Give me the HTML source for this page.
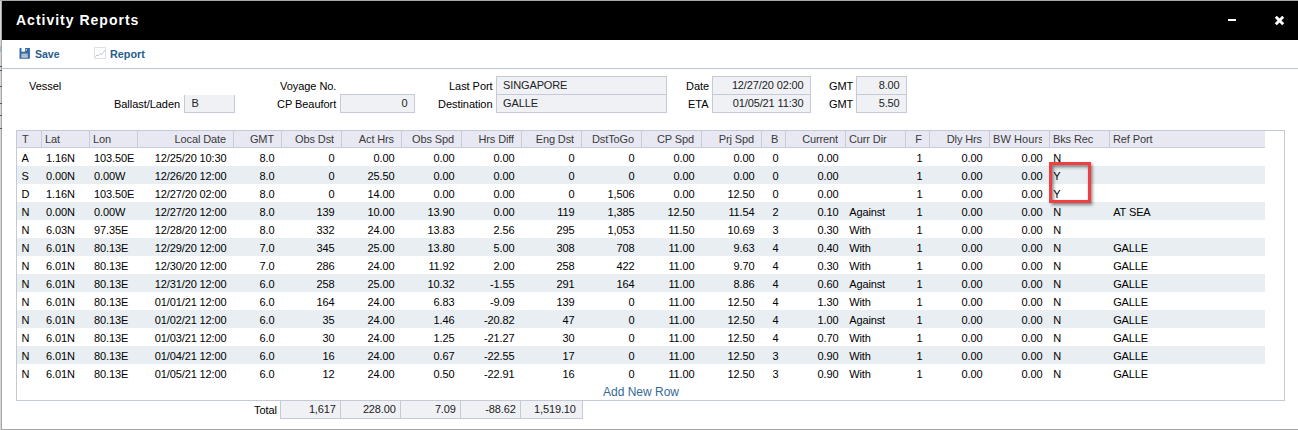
<!DOCTYPE html>
<html><head><meta charset="utf-8">
<style>
*{box-sizing:border-box;margin:0;padding:0}
html,body{width:1298px;height:430px;overflow:hidden;background:#fff;font-family:"Liberation Sans",Arial,sans-serif;font-size:11px;color:#000;letter-spacing:-0.12px}
#bgl{position:absolute;left:0;top:0;width:2px;height:430px;background:linear-gradient(90deg,#d6d6d6 0,#d6d6d6 1px,#a9a9a9 1px,#a9a9a9 2px)}
#bgt{position:absolute;left:0;top:0;width:1298px;height:1px;background:#a8a8ac}
#bgb{position:absolute;left:1px;top:429px;width:1297px;height:1px;background:#a6a6a6}
#title{position:absolute;left:2px;top:1px;width:1296px;height:39px;background:#000;color:#fff;font-weight:bold;font-size:14px;letter-spacing:1px}
#title span{position:absolute;left:14px;top:11px;line-height:16px}
#min{position:absolute;left:1226px;top:18px;width:8px;height:2px;background:#fff}
#tbline{position:absolute;left:2px;top:68px;width:1296px;height:1px;background:#b9c7d8}
.tbt{position:absolute;top:47.3px;font-weight:bold;font-size:11.5px;color:#265d8d;line-height:14px;letter-spacing:0;transform-origin:0 0;white-space:nowrap}
.lbl{position:absolute;line-height:14px;white-space:nowrap;letter-spacing:-0.05px}
.fld{position:absolute;height:19px;background:#f0f1f5;border:1px solid #c5cad6;line-height:14px;padding:1px 6px 0 6px;white-space:nowrap;color:#222}
.fld.r{text-align:right}
#grid{position:absolute;left:16px;top:130px;width:1269px;height:271px;border:1px solid #c3cad6}
table{border-collapse:separate;border-spacing:0;table-layout:fixed;position:absolute;left:0;top:0;width:1248px}
th{height:17px;background:#e8e8f3;font-weight:normal;color:#3a3a3a;border-right:1px solid #c9cdd9;border-bottom:1px solid #c9cdd9;padding:0;white-space:nowrap;overflow:hidden;text-align:left;line-height:16px}
th div{margin:0 7px 0 3px;overflow:hidden;white-space:nowrap;height:16px}
th:first-child div{margin-left:5px}
th.last{border-right:none}
td{height:18px;padding:2px 7.5px 0 4px;white-space:nowrap;overflow:hidden;line-height:16px;text-align:left;vertical-align:top}
td:first-child{padding-left:4.6px}
td:nth-child(16),td:nth-child(20),td:nth-child(21){padding-left:3.2px}
tr.a td{background:#e8eef2}
.r{text-align:right}
th.c{text-align:center}
th.c div{margin:0 2px 0 4px}
#add{position:absolute;left:0;top:254px;width:1248px;text-align:center;color:#356a98;line-height:14px;font-size:12px;letter-spacing:0}
#hl{position:absolute;left:1049px;top:162px;width:42px;height:41px;border:3px solid #f03f43;box-shadow:1.5px 2px 3px rgba(0,0,0,.45),inset 1.5px 2px 3.5px rgba(0,0,0,.5)}
</style></head><body>
<div id="bgl"></div><div style="position:absolute;left:0;top:66px;width:2px;height:1px;background:#55585e"></div><div style="position:absolute;left:0;top:70px;width:2px;height:1px;background:#55585e"></div><div style="position:absolute;left:0;top:86px;width:2px;height:1px;background:#55585e"></div><div style="position:absolute;left:0;top:103px;width:2px;height:1px;background:#55585e"></div><div style="position:absolute;left:0;top:115px;width:2px;height:1px;background:#55585e"></div><div style="position:absolute;left:0;top:128px;width:2px;height:1px;background:#55585e"></div><div style="position:absolute;left:0;top:46px;width:1px;height:6px;background:#9fb9d6"></div><div id="bgt"></div><div id="bgb"></div>
<div id="title"><span>Activity Reports</span><div id="min"></div>
<svg style="position:absolute;left:1272px;top:14px" width="11" height="11" viewBox="0 0 11 11"><path d="M1.8 1.8L9.2 9.2M9.2 1.8L1.8 9.2" stroke="#fff" stroke-width="2.9" stroke-linecap="butt"/></svg>
</div>
<svg style="position:absolute;left:19px;top:48px" width="12" height="11" viewBox="0 0 12 11"><path d="M0.5 0.6L1.2 0h9.7v10.8h-10.4z" fill="#2e69a4"/><rect x="2.5" y="0" width="3.7" height="3.7" fill="#fff"/><rect x="7.2" y="1.1" width="0.9" height="1.4" fill="#fff"/><rect x="2.4" y="5.5" width="6.4" height="4.4" fill="#a9b5c7"/><rect x="2.4" y="6.6" width="6.4" height="0.6" fill="#c3ccd9"/><rect x="2.4" y="8.2" width="6.4" height="0.6" fill="#c3ccd9"/></svg>
<span class="tbt" style="left:34.8px;transform:scaleX(0.915)">Save</span>
<svg style="position:absolute;left:94px;top:47px" width="12" height="12" viewBox="0 0 12 12"><rect x="0.5" y="0.5" width="11" height="11" fill="#fff" stroke="#e1dfe7"/><path d="M1 9.6L3 8.2L4 9L6 6.6L7.5 7.6L11 3.2" stroke="#b4bfd3" stroke-width="0.9" fill="none"/></svg>
<span class="tbt" style="left:109.6px;transform:scaleX(0.94)">Report</span>
<div id="tbline"></div>

<span class="lbl" style="left:29px;top:79px">Vessel</span>
<span class="lbl" style="left:114px;top:97px">Ballast/Laden</span>
<div class="fld" style="left:184px;top:95px;width:51px;height:18px;padding-left:6.5px;border-top:none">B</div>
<span class="lbl" style="left:280px;top:79px">Voyage No.</span>
<span class="lbl" style="left:277px;top:97px">CP Beaufort</span>
<div class="fld r" style="left:340px;top:94px;width:75px;padding-right:6.4px">0</div>
<span class="lbl" style="left:449px;top:79px">Last Port</span>
<span class="lbl" style="left:438px;top:97px">Destination</span>
<div class="fld" style="left:496px;top:76px;width:171px">SINGAPORE</div>
<div class="fld" style="left:496px;top:94px;width:171px">GALLE</div>
<span class="lbl" style="left:686px;top:79px">Date</span>
<span class="lbl" style="left:688px;top:97px">ETA</span>
<div class="fld r" style="left:712px;top:76px;width:99px;padding-right:6.4px">12/27/20 02:00</div>
<div class="fld r" style="left:712px;top:94px;width:99px;padding-right:6.4px">01/05/21 11:30</div>
<span class="lbl" style="left:829px;top:79px">GMT</span>
<span class="lbl" style="left:829px;top:97px">GMT</span>
<div class="fld r" style="left:856px;top:76px;width:51px;padding-right:6.4px">8.00</div>
<div class="fld r" style="left:856px;top:94px;width:51px;padding-right:6.4px">5.50</div>

<div id="grid">
<table><colgroup><col style="width:25px"><col style="width:48px"><col style="width:48px"><col style="width:96px"><col style="width:48px"><col style="width:60px"><col style="width:60px"><col style="width:60px"><col style="width:60px"><col style="width:60px"><col style="width:60px"><col style="width:60px"><col style="width:60px"><col style="width:24px"><col style="width:60px"><col style="width:60px"><col style="width:24px"><col style="width:60px"><col style="width:60px"><col style="width:60px"><col style="width:155px"></colgroup>
<tr class="h"><th class="l"><div>T</div></th><th class="l"><div>Lat</div></th><th class="l"><div>Lon</div></th><th class="r"><div>Local Date</div></th><th class="r"><div>GMT</div></th><th class="r"><div>Obs Dst</div></th><th class="r"><div>Act Hrs</div></th><th class="r"><div>Obs Spd</div></th><th class="r"><div>Hrs Diff</div></th><th class="r"><div>Eng Dst</div></th><th class="r"><div>DstToGo</div></th><th class="r"><div>CP Spd</div></th><th class="r"><div>Prj Spd</div></th><th class="c"><div>B</div></th><th class="r"><div>Current</div></th><th class="l"><div>Curr Dir</div></th><th class="c"><div>F</div></th><th class="r"><div>Dly Hrs</div></th><th class="r"><div style="text-align:left;letter-spacing:0.1px">BW Hours</div></th><th class="l"><div>Bks Rec</div></th><th class="l last"><div>Ref Port</div></th></tr>
<tr><td class="l">A</td><td class="l">1.16N</td><td class="l">103.50E</td><td class="r">12/25/20 10:30</td><td class="r">8.0</td><td class="r">0</td><td class="r">0.00</td><td class="r">0.00</td><td class="r">0.00</td><td class="r">0</td><td class="r">0</td><td class="r">0.00</td><td class="r">0.00</td><td class="r">0</td><td class="r">0.00</td><td class="l"></td><td class="r">1</td><td class="r">0.00</td><td class="r">0.00</td><td class="l">N</td><td class="l"></td></tr>
<tr class="a"><td class="l">S</td><td class="l">0.00N</td><td class="l">0.00W</td><td class="r">12/26/20 12:00</td><td class="r">8.0</td><td class="r">0</td><td class="r">25.50</td><td class="r">0.00</td><td class="r">0.00</td><td class="r">0</td><td class="r">0</td><td class="r">0.00</td><td class="r">0.00</td><td class="r">0</td><td class="r">0.00</td><td class="l"></td><td class="r">1</td><td class="r">0.00</td><td class="r">0.00</td><td class="l">Y</td><td class="l"></td></tr>
<tr><td class="l">D</td><td class="l">1.16N</td><td class="l">103.50E</td><td class="r">12/27/20 02:00</td><td class="r">8.0</td><td class="r">0</td><td class="r">14.00</td><td class="r">0.00</td><td class="r">0.00</td><td class="r">0</td><td class="r">1,506</td><td class="r">0.00</td><td class="r">12.50</td><td class="r">0</td><td class="r">0.00</td><td class="l"></td><td class="r">1</td><td class="r">0.00</td><td class="r">0.00</td><td class="l">Y</td><td class="l"></td></tr>
<tr class="a"><td class="l">N</td><td class="l">0.00N</td><td class="l">0.00W</td><td class="r">12/27/20 12:00</td><td class="r">8.0</td><td class="r">139</td><td class="r">10.00</td><td class="r">13.90</td><td class="r">0.00</td><td class="r">119</td><td class="r">1,385</td><td class="r">12.50</td><td class="r">11.54</td><td class="r">2</td><td class="r">0.10</td><td class="l">Against</td><td class="r">1</td><td class="r">0.00</td><td class="r">0.00</td><td class="l">N</td><td class="l">AT SEA</td></tr>
<tr><td class="l">N</td><td class="l">6.03N</td><td class="l">97.35E</td><td class="r">12/28/20 12:00</td><td class="r">8.0</td><td class="r">332</td><td class="r">24.00</td><td class="r">13.83</td><td class="r">2.56</td><td class="r">295</td><td class="r">1,053</td><td class="r">11.50</td><td class="r">10.69</td><td class="r">3</td><td class="r">0.30</td><td class="l">With</td><td class="r">1</td><td class="r">0.00</td><td class="r">0.00</td><td class="l">N</td><td class="l"></td></tr>
<tr class="a"><td class="l">N</td><td class="l">6.01N</td><td class="l">80.13E</td><td class="r">12/29/20 12:00</td><td class="r">7.0</td><td class="r">345</td><td class="r">25.00</td><td class="r">13.80</td><td class="r">5.00</td><td class="r">308</td><td class="r">708</td><td class="r">11.00</td><td class="r">9.63</td><td class="r">4</td><td class="r">0.40</td><td class="l">With</td><td class="r">1</td><td class="r">0.00</td><td class="r">0.00</td><td class="l">N</td><td class="l">GALLE</td></tr>
<tr><td class="l">N</td><td class="l">6.01N</td><td class="l">80.13E</td><td class="r">12/30/20 12:00</td><td class="r">7.0</td><td class="r">286</td><td class="r">24.00</td><td class="r">11.92</td><td class="r">2.00</td><td class="r">258</td><td class="r">422</td><td class="r">11.00</td><td class="r">9.70</td><td class="r">4</td><td class="r">0.30</td><td class="l">With</td><td class="r">1</td><td class="r">0.00</td><td class="r">0.00</td><td class="l">N</td><td class="l">GALLE</td></tr>
<tr class="a"><td class="l">N</td><td class="l">6.01N</td><td class="l">80.13E</td><td class="r">12/31/20 12:00</td><td class="r">6.0</td><td class="r">258</td><td class="r">25.00</td><td class="r">10.32</td><td class="r">-1.55</td><td class="r">291</td><td class="r">164</td><td class="r">11.00</td><td class="r">8.86</td><td class="r">4</td><td class="r">0.60</td><td class="l">Against</td><td class="r">1</td><td class="r">0.00</td><td class="r">0.00</td><td class="l">N</td><td class="l">GALLE</td></tr>
<tr><td class="l">N</td><td class="l">6.01N</td><td class="l">80.13E</td><td class="r">01/01/21 12:00</td><td class="r">6.0</td><td class="r">164</td><td class="r">24.00</td><td class="r">6.83</td><td class="r">-9.09</td><td class="r">139</td><td class="r">0</td><td class="r">11.00</td><td class="r">12.50</td><td class="r">4</td><td class="r">1.30</td><td class="l">With</td><td class="r">1</td><td class="r">0.00</td><td class="r">0.00</td><td class="l">N</td><td class="l">GALLE</td></tr>
<tr class="a"><td class="l">N</td><td class="l">6.01N</td><td class="l">80.13E</td><td class="r">01/02/21 12:00</td><td class="r">6.0</td><td class="r">35</td><td class="r">24.00</td><td class="r">1.46</td><td class="r">-20.82</td><td class="r">47</td><td class="r">0</td><td class="r">11.00</td><td class="r">12.50</td><td class="r">4</td><td class="r">1.00</td><td class="l">Against</td><td class="r">1</td><td class="r">0.00</td><td class="r">0.00</td><td class="l">N</td><td class="l">GALLE</td></tr>
<tr><td class="l">N</td><td class="l">6.01N</td><td class="l">80.13E</td><td class="r">01/03/21 12:00</td><td class="r">6.0</td><td class="r">30</td><td class="r">24.00</td><td class="r">1.25</td><td class="r">-21.27</td><td class="r">30</td><td class="r">0</td><td class="r">11.00</td><td class="r">12.50</td><td class="r">4</td><td class="r">0.70</td><td class="l">With</td><td class="r">1</td><td class="r">0.00</td><td class="r">0.00</td><td class="l">N</td><td class="l">GALLE</td></tr>
<tr class="a"><td class="l">N</td><td class="l">6.01N</td><td class="l">80.13E</td><td class="r">01/04/21 12:00</td><td class="r">6.0</td><td class="r">16</td><td class="r">24.00</td><td class="r">0.67</td><td class="r">-22.55</td><td class="r">17</td><td class="r">0</td><td class="r">11.00</td><td class="r">12.50</td><td class="r">3</td><td class="r">0.90</td><td class="l">With</td><td class="r">1</td><td class="r">0.00</td><td class="r">0.00</td><td class="l">N</td><td class="l">GALLE</td></tr>
<tr><td class="l">N</td><td class="l">6.01N</td><td class="l">80.13E</td><td class="r">01/05/21 12:00</td><td class="r">6.0</td><td class="r">12</td><td class="r">24.00</td><td class="r">0.50</td><td class="r">-22.91</td><td class="r">16</td><td class="r">0</td><td class="r">11.00</td><td class="r">12.50</td><td class="r">3</td><td class="r">0.90</td><td class="l">With</td><td class="r">1</td><td class="r">0.00</td><td class="r">0.00</td><td class="l">N</td><td class="l">GALLE</td></tr>
</table>
<div id="add">Add New Row</div>
</div>
<div id="hl"></div>
<span class="lbl" style="left:254px;top:403px">Total</span>
<div class="fld r" style="left:280px;top:400px;width:61px;padding-right:4.2px">1,617</div>
<div class="fld r" style="left:340px;top:400px;width:61px;padding-right:4.2px">228.00</div>
<div class="fld r" style="left:400px;top:400px;width:61px;padding-right:4.2px">7.09</div>
<div class="fld r" style="left:460px;top:400px;width:61px;padding-right:4.2px">-88.62</div>
<div class="fld r" style="left:520px;top:400px;width:63px;padding-right:6.2px">1,519.10</div>
</body></html>
